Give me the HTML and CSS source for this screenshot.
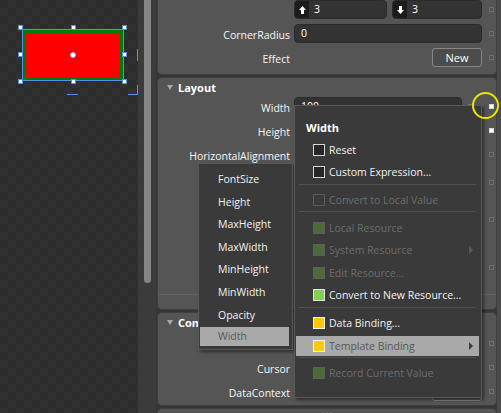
FILE: index.html
```html
<!DOCTYPE html>
<html lang="en">
<head>
    <meta charset="UTF-8" />
    <title>Properties - Width</title>
    <link rel="stylesheet" href="styles.css">
</head>
<body>
<div class="app">

    <!-- artboard -->
    <div class="artboard">
        <div class="shape">
            <div class="shape-fill"></div>
            <span class="handle tl"></span><span class="handle tc"></span><span class="handle tr"></span>
            <span class="handle ml"></span><span class="handle mr"></span>
            <span class="handle bl"></span><span class="handle bc"></span><span class="handle br"></span>
            <span class="pivot"></span>
        </div>
        <span class="guide g1"></span>
        <span class="guide g2"></span>
        <span class="guide g3"></span>
        <span class="guide g4"></span>
    </div>

    <div class="vscroll"><div class="thumb"></div></div>

    <!-- property panel -->
    <div class="props">
        <div class="group top">
            <div class="row">
                <span class="label"></span>
                <div class="field split">
                    <div class="input step"><span class="step-ico"><svg width="7" height="8" viewBox="0 0 7 8"><path d="M3.5 0 7 4H5v4H2V4H0z" fill="#fff"/></svg></span>3</div>
                    <div class="input step"><span class="step-ico"><svg width="7" height="8" viewBox="0 0 7 8"><path d="M3.5 8 7 4H5V0H2v4H0z" fill="#fff"/></svg></span>3</div>
                </div>
                <span class="mark"></span>
            </div>
            <div class="row">
                <span class="label">CornerRadius</span>
                <div class="field"><div class="input">0</div></div>
                <span class="mark"></span>
            </div>
            <div class="row">
                <span class="label">Effect</span>
                <div class="field right"><div class="btn">New</div></div>
                <span class="mark"></span>
            </div>
        </div>

        <div class="group layout">
            <div class="group-head"><span class="tri"></span>Layout</div>
            <div class="rows">
                <div class="row">
                    <span class="label">Width</span>
                    <div class="field width-field"><div class="input">100</div><span class="unit-mark"></span></div>
                    <span class="mark on"></span>
                </div>
                <div class="row">
                    <span class="label">Height</span>
                    <div class="field"><div class="input">50</div></div>
                    <span class="mark on"></span>
                </div>
                <div class="row">
                    <span class="label">HorizontalAlignment</span>
                    <div class="field"></div>
                    <span class="mark"></span>
                </div>
                <div class="row r26"><span class="label"></span><div class="field"></div><span class="mark"></span></div>
                <div class="row r38"><span class="label"></span><div class="field"></div><span class="mark"></span></div>
                <div class="row r48"><span class="label"></span><div class="field"></div><span class="mark"></span></div>
            </div>
            <div class="group-foot"></div>
        </div>

        <div class="group common">
            <div class="group-head"><span class="tri"></span>Common Properties</div>
            <div class="rows">
                <div class="row"><span class="label"></span><div class="field"></div><span class="mark"></span></div>
                <div class="row">
                    <span class="label">Cursor</span>
                    <div class="field"></div>
                    <span class="mark"></span>
                </div>
                <div class="row">
                    <span class="label">DataContext</span>
                    <div class="field right"><div class="btn">New</div></div>
                    <span class="mark"></span>
                </div>
            </div>
        </div>

        <div class="group next">
            <span class="grip"></span>
        </div>
    </div>

    <!-- property list popup -->
    <ul class="prop-list">
        <li>FontSize</li>
        <li>Height</li>
        <li>MaxHeight</li>
        <li>MaxWidth</li>
        <li>MinHeight</li>
        <li>MinWidth</li>
        <li>Opacity</li>
        <li class="hot">Width</li>
    </ul>

    <!-- advanced options menu -->
    <ul class="ctx-menu">
        <li class="title">Width</li>
        <li><span class="cb"></span>Reset</li>
        <li><span class="cb"></span>Custom Expression...</li>
        <li class="sep"></li>
        <li class="off"><span class="cb"></span>Convert to Local Value</li>
        <li class="sep"></li>
        <li class="off"><span class="cb res"></span>Local Resource</li>
        <li class="off sub"><span class="cb res"></span>System Resource</li>
        <li class="off"><span class="cb res"></span>Edit Resource...</li>
        <li><span class="cb res"></span>Convert to New Resource...</li>
        <li class="sep"></li>
        <li><span class="cb bind"></span>Data Binding...</li>
        <li class="hot sub"><span class="cb bind"></span>Template Binding</li>
        <li class="sep"></li>
        <li class="off"><span class="cb res"></span>Record Current Value</li>
    </ul>

    <div class="focus-ring"></div>
</div>
</body>
</html>
```

FILE: styles.css
```css
* { box-sizing: border-box; }
html,
body {
    margin: 0;
    padding: 0;
}
body {
    width: 501px;
    height: 413px;
    overflow: hidden;
    background: #2e2e2e;
    font-family: 'Open Sans', 'Noto Sans', sans-serif;
    font-size: 10.5px;
    color: #f2f2f2;
}
.app {
    position: relative;
    display: flex;
    width: 501px;
    height: 413px;
}

/* artboard */
.artboard {
    position: relative;
    width: 138px;
    flex: none;
    background-color: #2c2c2c;
    background-image: conic-gradient(#313131 25%, transparent 0 50%, #313131 0 75%, transparent 0);
    background-size: 16px 16px;
}
.shape {
    position: absolute;
    left: 22px;
    top: 29px;
    width: 102px;
    height: 52px;
    border: 1px solid #5b8fe6;
    background: #007a10;
    padding: 3px 3px 2px 3px;
}
.shape-fill { width: 100%; height: 100%; background: #ff0000; }
.handle {
    position: absolute;
    width: 5px;
    height: 5px;
    background: #fff;
    border: 1px solid #5b8fe6;
}
.handle.tl { left: -5px; top: -5px; }
.handle.tc { left: 48px; top: -5px; }
.handle.tr { right: -4px; top: -5px; }
.handle.ml { left: -5px; top: 22px; }
.handle.mr { right: -4px; top: 22px; }
.handle.bl { left: -5px; bottom: -4px; }
.handle.bc { left: 48px; bottom: -4px; }
.handle.br { right: -4px; bottom: -4px; }
.pivot {
    position: absolute;
    left: 47px;
    top: 22px;
    width: 6px;
    height: 6px;
    border-radius: 50%;
    background: #fff;
    border: 1px solid #9db8e8;
}
.guide { position: absolute; background: #5b8fe6; }
.guide.g1 { left: 137px; top: 49px; width: 1px; height: 12px; }
.guide.g2 { left: 137px; top: 85px; width: 1px; height: 10px; }
.guide.g3 { left: 128px; top: 94px; width: 10px; height: 1px; }
.guide.g4 { left: 67px; top: 94px; width: 11px; height: 1px; }

.vscroll {
    width: 19px;
    flex: none;
    background: #3b3b3b;
    padding-left: 6px;
    border-right: 1px solid #363636;
}
.vscroll .thumb {
    width: 7px;
    height: 283px;
    background: #858585;
    border-radius: 0 0 4px 4px;
}

/* property panel */
.props {
    flex: 1;
    display: flex;
    flex-direction: column;
    gap: 2px;
    background: #363636;
    border-right: 4px solid #4b4b4b;
}
.group {
    flex: none;
    background: #555555;
    border: 1px solid #3f3f3f;
    border-radius: 5px;
}
.group.top { height: 75px; border-top: none; border-radius: 0 0 5px 5px; display: flex; flex-direction: column; gap: 5px; }
.group.layout { height: 233px; }
.group.common { height: 94px; }
.group.next { flex: 1; display: flex; justify-content: center; padding-left: 0; }

.group-head {
    height: 19px;
    display: flex;
    align-items: center;
    padding-left: 9px;
    font-weight: bold;
    font-size: 11px;
    color: #fff;
}
.tri {
    width: 0;
    height: 0;
    border-left: 3px solid transparent;
    border-right: 3px solid transparent;
    border-top: 5px solid #a8a8a8;
    margin-right: 5px;
}
.rows { display: flex; flex-direction: column; gap: 5px; }
.common .rows { padding-top: 2px; }
.group-foot {
    margin-top: 3px;
    height: 14px;
    border-top: 1px solid #626262;
}

.row {
    display: grid;
    grid-template-columns: 132px 188px 1fr;
    column-gap: 4px;
    align-items: center;
    height: 19px;
}
.row.r26 { height: 26px; }
.row.r38 { height: 38px; }
.row.r48 { height: 48px; }
.label { text-align: right; white-space: nowrap; color: #f6f6f6; padding-top: 2px; }
.field { display: flex; height: 19px; }
.field.split { gap: 5px; }
.field.right { justify-content: flex-end; }
.input {
    flex: 1;
    height: 19px;
    line-height: 17px;
    padding-left: 6px;
    background: #333333;
    border: 1px solid #2b2b2b;
    border-radius: 4px;
    color: #fff;
    display: flex;
}
.input.step { padding-left: 0; flex: none; width: 93px; }
.input.step + .input.step { width: 90px; }
.step-ico {
    width: 14px;
    margin-right: 5px;
    background: #1c1c1c;
    border-radius: 3px 0 0 3px;
    display: flex;
    align-items: center;
    justify-content: center;
}
.width-field { gap: 6px; align-items: center; }
.width-field .input { flex: none; width: 168px; }
.unit-mark { width: 5px; height: 5px; background: #7a7a7a; }
.btn {
    width: 50px;
    height: 19px;
    line-height: 17px;
    text-align: center;
    border: 1px solid #868686;
    border-radius: 3px;
    background: #4c4c4c;
    color: #fff;
    font-size: 11px;
}
.mark {
    justify-self: center;
    width: 5px;
    height: 5px;
    border: 1px solid #6f6f6f;
    margin-left: 1px;
}
.mark.on { background: #fff; border-color: #d8d8d8; }
.grip {
    margin-top: 3px;
    width: 12px;
    height: 5px;
    background-image: radial-gradient(circle, #c8c8c8 0.8px, transparent 1.2px);
    background-size: 4px 3px;
}

/* popups */
.prop-list,
.ctx-menu {
    position: absolute;
    margin: 0;
    list-style: none;
    background: #3a3a3a;
    border: 1px solid #585858;
    box-shadow: 2px 2px 3px rgba(0, 0, 0, 0.45);
    z-index: 10;
}
.prop-list {
    left: 198px;
    top: 163px;
    width: 95px;
    height: 187px;
    padding: 4px 0 0 0;
}
.prop-list li {
    height: 22.6px;
    line-height: 22.6px;
    padding-left: 19px;
    color: #f2f2f2;
}
.prop-list li.hot {
    margin: 1px 3px 0 1px;
    height: 19px;
    line-height: 19px;
    padding-left: 18px;
    background: #a9a9a9;
    color: #585858;
}

.ctx-menu {
    left: 294px;
    top: 105px;
    width: 188px;
    height: 293px;
    padding: 10px 0 0 0;
}
.ctx-menu li {
    position: relative;
    height: 22.6px;
    display: flex;
    align-items: center;
    padding-left: 18px;
    color: #f2f2f2;
}
.ctx-menu li.title { padding-left: 11px; font-weight: bold; font-size: 11px; color: #fff; }
.ctx-menu li.sep { height: 5px; padding: 0; margin: 0 5px 0 4px; border-top: 1px solid #505050; align-items: flex-start; }
.ctx-menu li.off { color: #6d6d6d; }
.ctx-menu li.hot {
    margin: 0 2px 0 1px;
    padding-left: 17px;
    background: #a9a9a9;
    color: #585858;
    height: 20px;
    margin-top: 1.3px;
    margin-bottom: 1.3px;
}
.ctx-menu li.sub::after {
    content: '';
    position: absolute;
    right: 8px;
    top: 50%;
    margin-top: -4px;
    border-top: 4px solid transparent;
    border-bottom: 4px solid transparent;
    border-left: 4px solid #e8e8e8;
}
.ctx-menu li.hot.sub::after { right: 6px; border-left-color: #3c3c3c; }
.ctx-menu li.off.sub::after { border-left-color: #5a5a5a; }

.cb {
    flex: none;
    width: 12px;
    height: 12px;
    margin-right: 4px;
    border: 1px solid #d6d6d6;
    background: #262626;
}
.off .cb { border-color: #5b5b5b; background: #3a3a3a; }
.cb.res { background: #82d04f; border-color: #e4e4e4; }
.off .cb.res { background: #4d6a3b; border-color: #5e5e5e; }
.cb.bind { background: #ffc800; border-color: #f4f4f4; }

.focus-ring {
    position: absolute;
    left: 472px;
    top: 92px;
    width: 27px;
    height: 27px;
    border: 2px solid #ece600;
    border-radius: 50%;
    z-index: 20;
}
```
